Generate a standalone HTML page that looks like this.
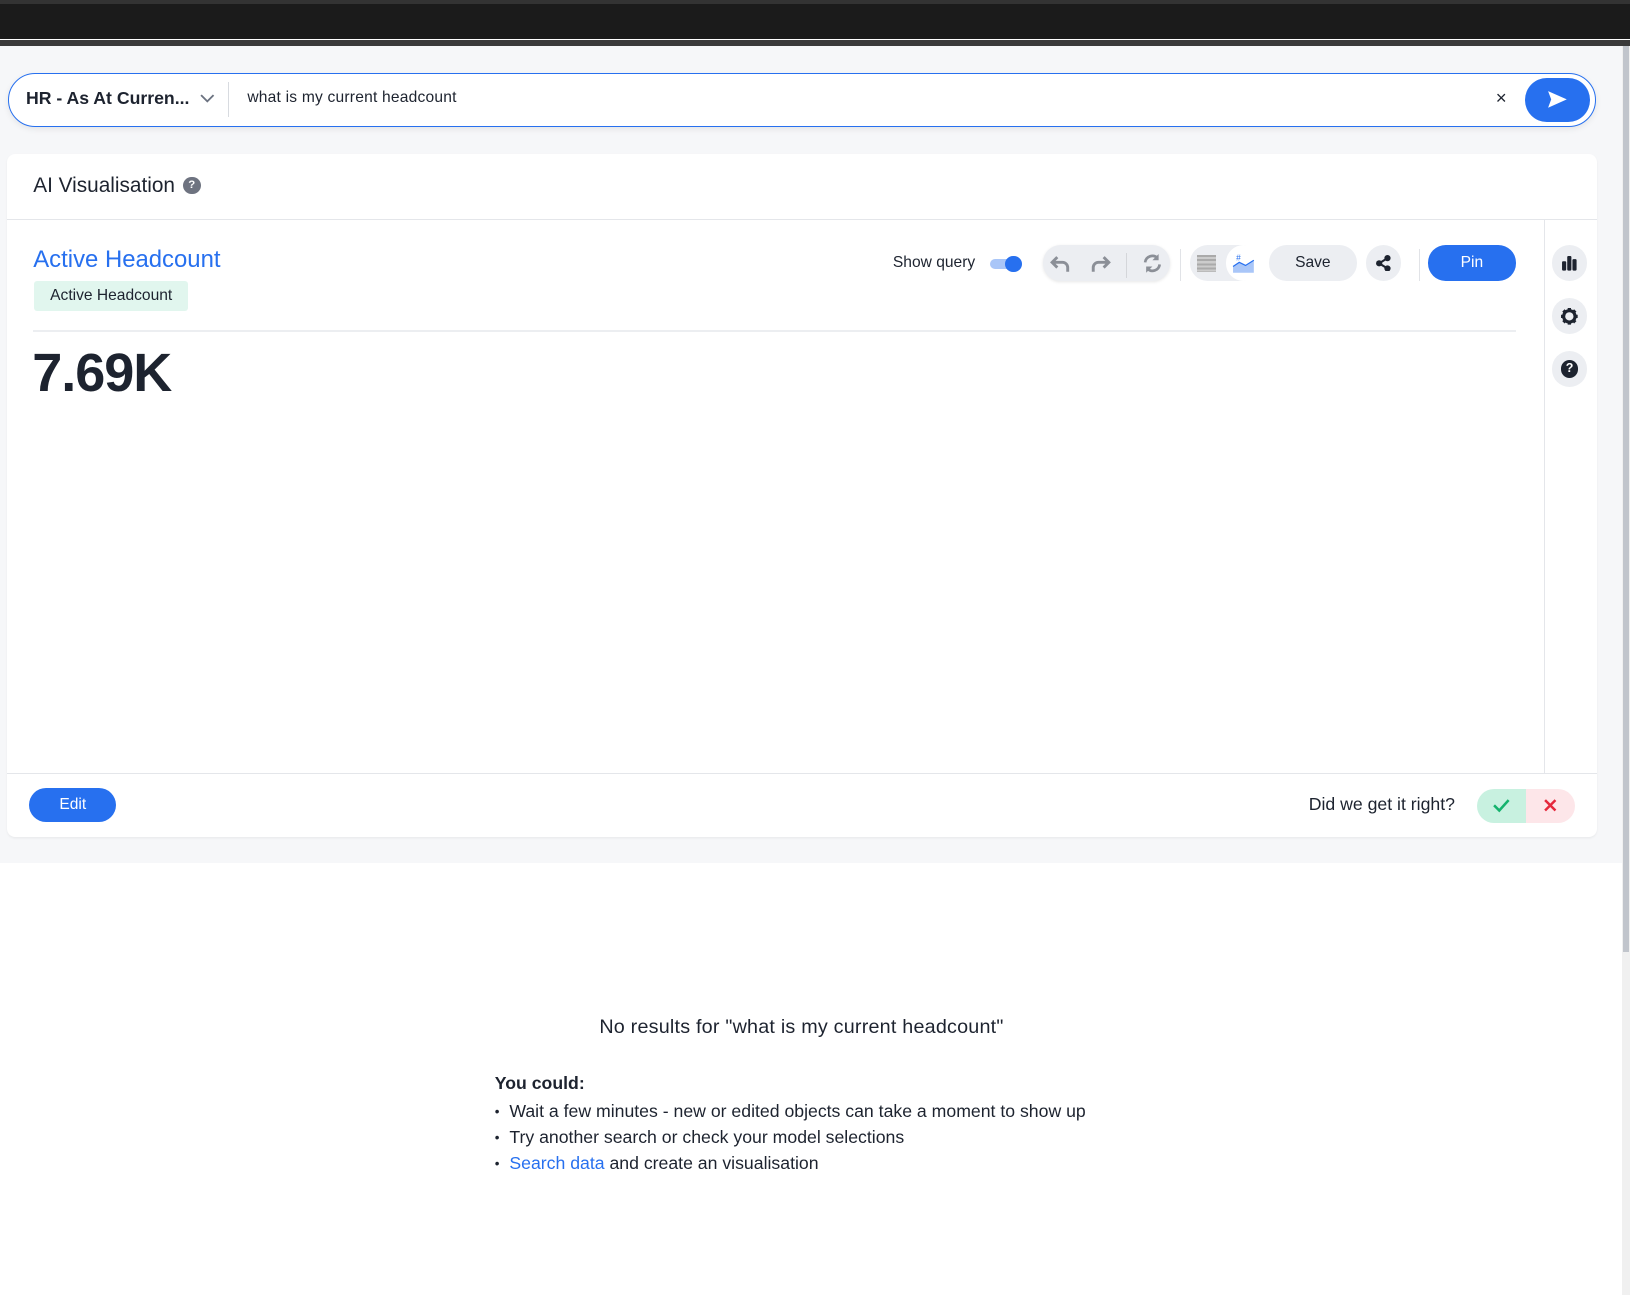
<!DOCTYPE html>
<html><head><meta charset="utf-8"><style>
*{box-sizing:border-box;margin:0;padding:0}
html,body{width:1630px;height:1295px;overflow:hidden;background:#fff}
#root{zoom:1.0395;width:1568px;height:1246px;position:relative;font-family:"Liberation Sans",sans-serif;color:#1d232f}
.abs{position:absolute}
.bg{left:0;top:44px;width:1560px;height:786px;background:#f6f7f9}
.search{left:8px;top:70px;width:1527px;height:52px;border:1.5px solid #2770ef;border-radius:26px;background:#fff;box-shadow:0 2px 6px rgba(0,0,0,.08)}
.card{left:7px;top:148px;width:1529px;height:657px;background:#fff;border-radius:8px;box-shadow:0 1px 2px rgba(0,0,0,.05)}
.circ{width:34px;height:34px;border-radius:50%;background:#eceef2;display:flex;align-items:center;justify-content:center}
.pill{border-radius:17px;height:34px;display:flex;align-items:center;justify-content:center;font-size:15px}
li{list-style:none;position:relative;padding-left:14px;font-size:17px;line-height:25px}
li:before{content:"•";position:absolute;left:0;font-size:13px}
</style></head><body><div id="root">
<div class="abs" style="left:0;top:0;width:1568px;height:4px;background:#333"></div>
<div class="abs" style="left:0;top:4px;width:1568px;height:34px;background:#1b1b1b"></div>
<div class="abs" style="left:0;top:38px;width:1568px;height:6px;background:#3a3a3a"></div>
<div class="abs bg"></div>
<div class="abs" style="left:1560px;top:44px;width:8px;height:1202px;background:#f0f0f0"></div>
<div class="abs" style="left:1561px;top:44px;width:6px;height:872px;background:#c1c5cc"></div>

<div class="abs search">
 <div class="abs" style="left:16px;top:14px;font-size:17px;font-weight:bold;color:#1d232f">HR - As At Curren...</div>
 <svg class="abs" style="left:182px;top:18px" width="16" height="12" viewBox="0 0 16 12"><path d="M2 3l6 6 6-6" fill="none" stroke="#6b7280" stroke-width="1.8"/></svg>
 <div class="abs" style="left:210px;top:8px;width:1px;height:34px;background:#d8dbe0"></div>
 <div class="abs" style="left:229px;top:15px;font-size:15px;letter-spacing:0.2px;color:#1d232f">what is my current headcount</div>
 <div class="abs" style="left:1430px;top:13px;font-size:18px;color:#1d232f">×</div>
 <div class="abs" style="left:1458px;top:4px;width:63px;height:42px;border-radius:21px;background:#2770ef"></div>
 <svg class="abs" style="left:1478px;top:14px" width="22" height="22" viewBox="0 0 22 22"><path d="M2 3l18 8-18 8 3-8z" fill="#fff"/></svg>
</div>

<div class="abs card">
 <div class="abs" style="left:25px;top:19px;font-size:20px">AI Visualisation</div>
 <div class="abs" style="left:169px;top:22px;width:17px;height:17px;border-radius:50%;background:#6e7380;color:#fff;font-size:11px;font-weight:bold;text-align:center;line-height:17px">?</div>
 <div class="abs" style="left:0;top:63px;width:1529px;height:1px;background:#e4e6ea"></div>
 <div class="abs" style="left:1478px;top:63px;width:1px;height:534px;background:#e4e6ea"></div>
 <div class="abs circ" style="left:1486px;top:88px"><svg width="16" height="16" viewBox="0 0 16 16"><rect x="1" y="6" width="4" height="9" rx="1" fill="#1d232f"/><rect x="6" y="1" width="4" height="14" rx="1" fill="#1d232f"/><rect x="11" y="4" width="4" height="11" rx="1" fill="#1d232f"/></svg></div>
 <div class="abs circ" style="left:1486px;top:139px"><svg width="18" height="18" viewBox="0 0 18 18"><circle cx="9" cy="9" r="5.5" fill="none" stroke="#1d232f" stroke-width="3"/><g stroke="#1d232f" stroke-width="3.2"><path d="M9 1v3M9 14v3M1 9h3M14 9h3M3.3 3.3l2.2 2.2M12.5 12.5l2.2 2.2M3.3 14.7l2.2-2.2M12.5 5.5l2.2-2.2"/></g></svg></div>
 <div class="abs circ" style="left:1486px;top:190px"><div style="width:17px;height:17px;border-radius:50%;background:#1d232f;color:#fff;font-size:12px;font-weight:bold;text-align:center;line-height:17px">?</div></div>

 <div class="abs" style="left:25px;top:89px;font-size:23px;color:#2770ef">Active Headcount</div>
 <div class="abs" style="left:26px;top:122px;width:148px;height:29px;background:#e1f6ee;border-radius:3px;font-size:15px;line-height:29px;text-align:center">Active Headcount</div>

 <div class="abs" style="left:852px;top:96px;font-size:15px">Show query</div>
 <div class="abs" style="left:945px;top:101px;width:28px;height:10px;border-radius:5px;background:#a9c6f8"></div>
 <div class="abs" style="left:960px;top:98px;width:16px;height:16px;border-radius:50%;background:#2770ef"></div>
 <div class="abs pill" style="left:996px;top:88px;width:123px;background:#eceef2;box-shadow:0 1px 3px rgba(0,0,0,.1)"></div>
 <svg class="abs" style="left:1002px;top:95px" width="24" height="20" viewBox="0 0 24 20"><path d="M8 4L3 9l5 5M3 9h10a5 5 0 0 1 5 5v4" fill="none" stroke="#8b8f97" stroke-width="2.8"/></svg>
 <svg class="abs" style="left:1039px;top:95px" width="24" height="20" viewBox="0 0 24 20"><path d="M16 4l5 5-5 5M21 9H11a5 5 0 0 0-5 5v4" fill="none" stroke="#8b8f97" stroke-width="2.8"/></svg>
 <div class="abs" style="left:1076px;top:95px;width:1px;height:24px;background:#d4d6da"></div>
 <svg class="abs" style="left:1092px;top:95px" width="20" height="20" viewBox="0 0 20 20"><path d="M3 9a7 7 0 0 1 12-4M17 11a7 7 0 0 1-12 4" fill="none" stroke="#8b8f97" stroke-width="2.6"/><path d="M16 1v6h-6zM4 19v-6h6z" fill="#8b8f97"/></svg>
 <div class="abs" style="left:1128px;top:92px;width:1px;height:30px;background:#e1e3e7"></div>
 <div class="abs pill" style="left:1138px;top:88px;width:67px;background:#eceef2"></div>
 <div class="abs" style="left:1145px;top:97px;width:18px;height:17px;background:repeating-linear-gradient(#aaa 0 2px,#ccc 2px 4px)"></div>
 <div class="abs" style="left:1172px;top:88px;width:34px;height:34px;border-radius:50%;background:#fff"></div>
 <svg class="abs" style="left:1178px;top:95px" width="22" height="20" viewBox="0 0 22 20"><path d="M1 19V13l6-4 6 3 8-5v12z" fill="#a9c6f8"/><path d="M1 13l6-4 6 3 8-5" fill="none" stroke="#2770ef" stroke-width="1.2"/><text x="4" y="7" font-size="8" fill="#2770ef" font-family="Liberation Sans">#</text></svg>
 <div class="abs pill" style="left:1214px;top:88px;width:84px;background:#eceef2">Save</div>
 <div class="abs circ" style="left:1307px;top:88px"><svg width="16" height="16" viewBox="0 0 16 16"><path d="M12 3L4 8l8 5" stroke="#1d232f" stroke-width="2" fill="none"/><circle cx="12" cy="3" r="3" fill="#1d232f"/><circle cx="4" cy="8" r="3" fill="#1d232f"/><circle cx="12" cy="13" r="3" fill="#1d232f"/></svg></div>
 <div class="abs" style="left:1358px;top:92px;width:1px;height:30px;background:#e1e3e7"></div>
 <div class="abs pill" style="left:1367px;top:88px;width:84px;background:#2770ef;color:#fff">Pin</div>

 <div class="abs" style="left:25px;top:169px;width:1426px;height:2px;background:#eceef1"></div>
 <div class="abs" style="left:24px;top:181px;font-size:52px;font-weight:bold;letter-spacing:-1px;color:#1d232f">7.69K</div>

 <div class="abs" style="left:0;top:596px;width:1529px;height:1px;background:#e4e6ea"></div>
 <div class="abs pill" style="left:21px;top:610px;width:84px;height:33px;background:#2770ef;color:#fff">Edit</div>
 <div class="abs" style="left:1252px;top:616px;font-size:17px">Did we get it right?</div>
 <div class="abs" style="left:1414px;top:611px;width:47px;height:33px;background:#c8f1e0;border-radius:17px 0 0 17px"></div>
 <div class="abs" style="left:1461px;top:611px;width:47px;height:33px;background:#fde6e9;border-radius:0 17px 17px 0"></div>
 <svg class="abs" style="left:1428px;top:619px" width="18" height="16" viewBox="0 0 18 16"><path d="M2 8l5 5 9-10" fill="none" stroke="#14b36d" stroke-width="2.4"/></svg>
 <svg class="abs" style="left:1477px;top:620px" width="14" height="14" viewBox="0 0 14 14"><path d="M2 2l10 10M12 2L2 12" stroke="#e5283c" stroke-width="2.4"/></svg>
</div>

<div class="abs" style="left:0;top:977px;width:1542px;text-align:center;font-size:19px;letter-spacing:0.2px">No results for "what is my current headcount"</div>
<div class="abs" style="left:476px;top:1032px;font-size:17px;font-weight:bold">You could:</div>
<ul class="abs" style="left:476px;top:1057px">
<li>Wait a few minutes - new or edited objects can take a moment to show up</li>
<li>Try another search or check your model selections</li>
<li><span style="color:#2770ef">Search data</span> and create an visualisation</li>
</ul>
</div></body></html>
